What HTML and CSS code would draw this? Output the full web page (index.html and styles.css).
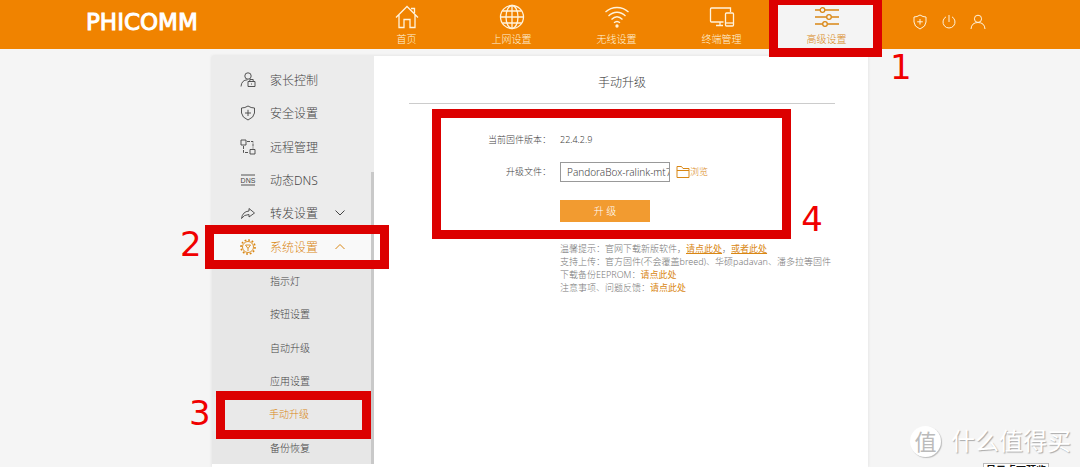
FILE: index.html
```html
<!DOCTYPE html>
<html lang="zh-CN">
<head>
<meta charset="utf-8">
<title>PHICOMM 手动升级</title>
<link rel="stylesheet" href="styles.css">
</head>
<body>
<header class="topbar">
  <a class="logo" href="#">PHICOMM</a>
  <nav class="nav">
    <a class="nav-item" href="#"><svg width="26" height="26" viewBox="0 0 26 26"><path d="M2 13.500 13 2.500 24 13.500M5 11V23.500H10V15.500H16V23.500H21V11M17 4.500H20.500V9"/></svg>首页</a>
    <a class="nav-item" href="#"><svg width="26" height="26" viewBox="0 0 26 26"><circle cx="13" cy="13" r="11.500"/><ellipse cx="13" cy="13" rx="6" ry="11.500"/><path d="M13 1.500V24.500M1.500 13H24.500M3.500 7H22.500M3.500 19H22.500"/></svg>上网设置</a>
    <a class="nav-item" href="#"><svg width="26" height="26" viewBox="0 0 26 26"><path d="M1.500 8C8 2 18 2 24.500 8M4.500 12C9.500 7 16.500 7 21.500 12M7.500 15.500C11 12 15 12 18.500 15.500M10 18.800C12 17 14 17 16 18.800"/><circle cx="13" cy="22" r="1" class="solid"/></svg>无线设置</a>
    <a class="nav-item" href="#"><svg width="26" height="26" viewBox="0 0 26 26"><path d="M14.500 18H2.500Q1.500 18 1.500 17V5Q1.500 4 2.500 4H21.500V8M11 18V21.500M7 21.500H14"/><rect x="16.500" y="9" width="8" height="13" rx="1"/><path d="M16.500 19H24.500"/></svg>终端管理</a>
    <a class="nav-item active" href="#"><svg width="26" height="26" viewBox="0 0 26 26"><path d="M1 6H6M11 6H25M1 13H12.500M17.500 13H25M1 20H8.500M13.500 20H25"/><circle cx="8.500" cy="6" r="2.300"/><circle cx="15" cy="13" r="2.300"/><circle cx="11" cy="20" r="2.300"/></svg>高级设置<span class="mark mark-nav"></span><span class="num num-nav">1</span></a>
  </nav>
  <div class="tools">
    <button type="button" aria-label="安全"><svg width="16" height="16" viewBox="0 0 16 16"><path d="M8 1Q11 3 14 3V8Q14 12.500 8 15Q2 12.500 2 8V3Q5 3 8 1M8 5V10.500M5.200 7.800H10.800"/></svg></button>
    <button type="button" aria-label="电源"><svg width="16" height="16" viewBox="0 0 16 16"><path d="M5 2.800A6 6 0 1 0 11 2.800M8 1V8"/></svg></button>
    <button type="button" aria-label="用户"><svg width="16" height="16" viewBox="0 0 16 16"><circle cx="8" cy="4.800" r="3.600"/><path d="M1 15Q1.500 8.500 8 8.500Q14.500 8.500 15 15"/></svg></button>
  </div>
</header>

<div class="panel">
  <aside class="sidebar">
    <ul class="menu">
      <li><a href="#"><svg width="16" height="16" viewBox="0 0 16 16"><circle cx="8" cy="4" r="3.200"/><path d="M1 14.500Q1.500 8 7.500 7.800M8 9.500H15V14.500H8ZM9.800 9.500V7.500H13.200V9.500M11.500 11.500V12.500"/></svg>家长控制</a></li>
      <li><a href="#"><svg width="16" height="16" viewBox="0 0 16 16"><path d="M8 1Q11 3 14.500 3V8Q14 12.500 8 15Q2 12.500 1.500 8V3Q5 3 8 1M8 4.800V11M5 8H11"/></svg>安全设置</a></li>
      <li><a href="#"><svg width="16" height="16" viewBox="0 0 16 16"><path d="M1 1H6V6H1ZM10 10.500H15V15H10Z"/><path d="M7 2.500H13V9.500M3.500 7V13.500H9" stroke-dasharray="3 1"/></svg>远程管理</a></li>
      <li><a href="#"><svg width="16" height="16" viewBox="0 0 16 16"><path d="M1 3H15M1 13H15"/><text x="8" y="11" text-anchor="middle" class="dns">DNS</text></svg>动态DNS</a></li>
      <li><a href="#"><svg width="16" height="16" viewBox="0 0 16 16"><path d="M9 3.500 14.500 8 9 12V9.500Q4 9.500 1.500 13.500Q2.500 6.500 9 6Z"/></svg>转发设置<svg class="arrow" width="12" height="8" viewBox="0 0 12 8"><path d="M1.500 1.500 6 6 10.500 1.500"/></svg></a></li>
      <li class="open">
        <a class="current" href="#"><svg width="16" height="16" viewBox="0 0 16 16"><circle cx="8" cy="8" r="5.500"/><circle cx="8" cy="8" r="7" stroke-width="1.600" stroke-dasharray="1.800 1.860"/><path d="M5.500 6H10.500L8 9.500ZM8 9.500V12"/></svg>系统设置<svg class="arrow" width="12" height="8" viewBox="0 0 12 8"><path d="M1.500 6 6 1.500 10.500 6"/></svg><span class="mark mark-menu"></span><span class="num num-menu">2</span></a>
        <ul class="submenu">
          <li><a href="#">指示灯</a></li>
          <li><a href="#">按钮设置</a></li>
          <li><a href="#">自动升级</a></li>
          <li><a href="#">应用设置</a></li>
          <li><a class="selected" href="#">手动升级<span class="mark mark-sub"></span><span class="num num-sub">3</span></a></li>
          <li><a href="#">备份恢复</a></li>
        </ul>
      </li>
    </ul>
    <span class="scroll-thumb"></span>
  </aside>

  <main class="content">
    <h1>手动升级</h1>
    <form class="form">
      <span class="label">当前固件版本：</span><span>22.4.2.9</span>
      <label class="label" for="file">升级文件：</label>
      <div class="file-row">
        <input id="file" type="text" value="PandoraBox-ralink-mt7">
        <a class="browse" href="#"><svg width="14" height="14" viewBox="0 0 14 14"><path d="M1 12.500V1.500H5.500L7 3.500H13V12.500ZM1 5.500H13"/></svg>浏览</a>
      </div>
      <button class="submit" type="button">升 级</button>
      <span class="mark mark-form"></span><span class="num num-form">4</span>
    </form>
    <div class="hints">
      <p>温馨提示：官网下载新版软件，<a class="line" href="#">请点此处</a>，<a class="line" href="#">或者此处</a></p>
      <p>支持上传：官方固件(不会覆盖breed)、华硕padavan、潘多拉等固件</p>
      <p>下载备份EEPROM：<a href="#">请点此处</a></p>
      <p>注意事项、问题反馈：<a href="#">请点此处</a></p>
    </div>
  </main>
</div>
<div class="watermark"><span class="badge">值</span>什么值得买</div>
<div class="tip">显示桌面预览</div>
</body>
</html>
```
FILE: styles.css
```css
* { box-sizing: border-box; }
html, body { height: 100%; overflow: hidden; }
body {
  position: relative;
  display: flex;
  flex-direction: column;
  margin: 0;
  background: #f5f5f5;
  color: #444;
  font-family: "Noto Sans", "Noto Sans CJK SC", sans-serif;
  font-weight: 300;
  font-size: 9px;
}
a { color: inherit; text-decoration: none; }
ul { margin: 0; padding: 0; list-style: none; }
svg { fill: none; stroke: currentColor; stroke-width: 1; flex: none; }
button { font: inherit; border: 0; padding: 0; background: none; color: inherit; }

.topbar {
  display: flex;
  flex: none;
  height: 49px;
  padding-left: 86px;
  background: #f08300;
  color: #fff3dc;
}
.logo {
  width: 268px;
  line-height: 44px;
  color: #fff;
  font-family: "DejaVu Sans", sans-serif;
  font-size: 23px;
  font-weight: 400;
  -webkit-text-stroke: 1px #fff;
}
.nav { display: flex; }
.nav-item {
  position: relative;
  display: flex;
  flex-direction: column;
  align-items: center;
  width: 105px;
  padding-top: 4px;
  font-size: 10px;
  line-height: 19px;
}
.nav-item svg { stroke-width: 1.3; }
.nav-item .solid { fill: currentColor; }
.nav-item.active { background: #f4f4f4; color: #d98714; }
.tools { display: flex; align-items: center; gap: 13px; margin-left: 33px; height: 44px; }
.tools button { display: flex; }

.panel {
  display: grid;
  flex: 1;
  grid-template-columns: 162px 1fr;
  width: 656px;
  max-width: 100%;
  margin: 7px auto 0;
  background: #fff;
  box-shadow: 0 0 3px #ddd;
}
.sidebar { position: relative; align-self: start; padding-top: 7px; background: #ececec; }
.menu { display: grid; grid-template-rows: repeat(12, 1fr); height: 401px; font-size: 12px; }
.menu .open { grid-row: span 7; display: grid; grid-template-rows: 1fr 6fr; }
.menu a { position: relative; display: flex; align-items: center; height: 100%; padding-left: 28px; }
.menu a svg:first-child { margin-right: 14px; stroke-width: 0.9; }
.menu .arrow { margin-left: 16px; }
.menu .dns { font: 7px "Liberation Sans", sans-serif; fill: currentColor; stroke: none; }
.menu .current { background: #f9f9f9; color: #d98714; }
.submenu { display: grid; grid-auto-rows: 1fr; background: #e7e7e7; font-size: 10px; }
.submenu a { padding-left: 58px; }
.submenu .selected { padding-left: 57px; background: #e9e9e9; color: #d98714; }
.scroll-thumb { position: absolute; right: 0; top: 116px; bottom: 0; width: 3px; background: #c9c9c9; }

.content { padding: 16px 33px 0 35px; }
h1 {
  margin: 0;
  padding-bottom: 10px;
  border-bottom: 1px solid #ccc;
  font-size: 12px;
  font-weight: 300;
  line-height: 21px;
  text-align: center;
}
.form {
  position: relative;
  display: grid;
  grid-template-columns: 142px 1fr;
  column-gap: 9px;
  align-items: center;
  padding-top: 28px;
  line-height: 16px;
}
.label { text-align: right; }
.file-row { display: flex; align-items: center; margin: 14px 0 18px; }
.form label { margin-bottom: 4px; }
.file-row input {
  width: 110px;
  height: 20px;
  padding: 0 0 0 6px;
  border: 1px solid #999;
  border-radius: 0;
  background: #fff;
  color: #444;
  font: inherit;
  font-size: 10px;
}
.browse { display: flex; align-items: center; margin-left: 6px; color: #d98714; }
.submit {
  grid-column: 2;
  width: 90px;
  height: 22px;
  background: #f29b30;
  color: #fff;
  font-size: 10px;
}
.hints { margin: 20px 0 0 151px; color: #777; line-height: 13px; white-space: nowrap; }
.hints p { margin: 0; }
.hints a { color: #d98714; font-weight: 400; }
.hints .line { text-decoration: underline; }

/* numbered step frames */
.mark { position: absolute; z-index: 2; border: 9px solid #dc0000; pointer-events: none; }
.num {
  position: absolute;
  z-index: 2;
  color: #f00000;
  font: 400 34px/34px "DejaVu Sans", sans-serif;
}
.mark-nav { inset: -4px -3px -8px -5px; }
.num-nav { left: 116px; top: 50px; }
.mark-menu { inset: -5px -15px -6px -7px; }
.num-menu { left: -32px; top: -3px; }
.mark-sub { inset: -6px 3px -8px 4px; }
.num-sub { left: -23px; top: -1px; }
.mark-form { left: 23px; right: 44px; top: 5px; bottom: -17px; }
.num-form { right: 12px; bottom: -14px; }

.watermark {
  position: absolute;
  right: 9px;
  bottom: 10px;
  display: flex;
  align-items: center;
  gap: 10px;
  color: #fff;
  font-size: 24px;
  font-weight: 400;
  line-height: 32px;
  text-shadow: 1px 1px 1px #aaa;
}
.badge {
  width: 31px;
  height: 31px;
  border-radius: 50%;
  background: #fff;
  box-shadow: 1px 1px 1px #bbb;
  color: #bbb;
  font-size: 22px;
  line-height: 30px;
  text-align: center;
  text-shadow: none;
}
.tip {
  position: absolute;
  left: 983px;
  top: 463px;
  padding: 0 2px;
  border: 1px solid #bbb;
  background: #fff;
  color: #111;
  font-size: 10px;
  font-weight: 700;
  line-height: 12px;
}
```
